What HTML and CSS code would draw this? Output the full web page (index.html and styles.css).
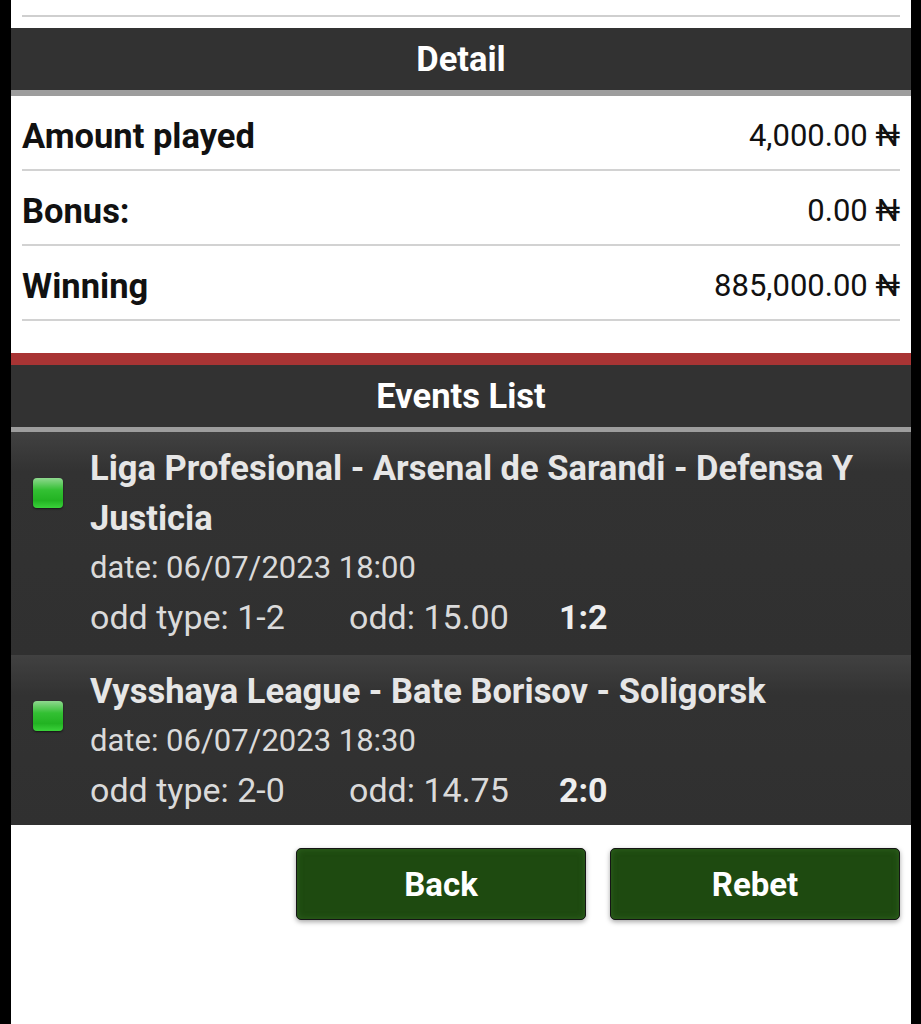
FILE: index.html
```html
<!DOCTYPE html>
<html lang="en">
<head>
<meta charset="utf-8">
<title>Bet detail</title>
<link rel="stylesheet" href="styles.css">
</head>
<body>
<div class="page">
  <div class="top-row"></div>
  <div class="section-head">Detail</div>
  <div class="detail-rows">
    <div class="drow"><span class="dlabel">Amount played</span><span class="dval">4,000.00 ₦</span></div>
    <div class="drow"><span class="dlabel">Bonus:</span><span class="dval">0.00 ₦</span></div>
    <div class="drow"><span class="dlabel">Winning</span><span class="dval">885,000.00 ₦</span></div>
  </div>
  <div class="section-head events-head">Events List</div>
  <div class="events">
    <div class="event">
      <span class="dot"></span>
      <div class="ebody">
        <div class="etitle">Liga Profesional - Arsenal de Sarandi - Defensa Y Justicia</div>
        <div class="edate">date: 06/07/2023 18:00</div>
        <div class="eodds"><span class="otype">odd type: 1-2</span><span class="odd">odd: 15.00</span><b class="score">1:2</b></div>
      </div>
    </div>
    <div class="event">
      <span class="dot"></span>
      <div class="ebody">
        <div class="etitle">Vysshaya League - Bate Borisov - Soligorsk</div>
        <div class="edate">date: 06/07/2023 18:30</div>
        <div class="eodds"><span class="otype">odd type: 2-0</span><span class="odd">odd: 14.75</span><b class="score">2:0</b></div>
      </div>
    </div>
  </div>
  <div class="actions">
    <button class="btn">Back</button>
    <button class="btn">Rebet</button>
  </div>
</div>
</body>
</html>
```

FILE: styles.css
```css
html, body {
  margin: 0;
  padding: 0;
  background: #000;
}
body {
  padding: 0 10px 0 11px;
  font-family: Roboto, "Liberation Sans", sans-serif;
}
.page {
  background: #fff;
  min-height: 1024px;
}
.top-row {
  height: 15px;
  margin: 0 11px 11px;
  border-bottom: 2px solid #cfcfcf;
}
.section-head {
  height: 62px;
  line-height: 62px;
  background: #323232;
  color: #fff;
  text-align: center;
  font-weight: 700;
  font-size: 34.5px;
  border-bottom: 6px solid #9d9d9d;
}
.detail-rows {
  margin: 0 11px;
  padding-bottom: 32px;
}
.drow {
  height: 73px;
  border-bottom: 2px solid #d2d2d2;
  display: flex;
  align-items: center;
  justify-content: space-between;
  color: #111;
}
.dlabel {
  font-weight: 700;
  font-size: 34.5px;
  padding-top: 6px;
}
.dval {
  font-weight: 400;
  font-size: 31px;
  padding-top: 6px;
}
.events-head {
  border-top: 12px solid #a83434;
  border-bottom: 5px solid #9d9d9d;
}
.event {
  display: flex;
  align-items: flex-start;
  padding: 11px 12px 11px 22px;
  background: linear-gradient(#414141, #323232 40px, #303030);
  color: #e2e2e2;
}
.event:first-child {
  padding-bottom: 14px;
}
.dot {
  flex: none;
  width: 30px;
  height: 30px;
  margin-top: 35px;
  margin-right: 27px;
  border-radius: 4px;
  background: linear-gradient(#8fd88f, #33c033 40%, #22b322 75%, #3ad23a);
  box-shadow: 0 1px 2px rgba(0,0,0,0.6);
}
.ebody {
  line-height: 50px;
}
.etitle {
  font-weight: 700;
  font-size: 34.5px;
  color: #e6e6e6;
}
.edate {
  font-size: 31px;
  color: #dadada;
}
.eodds {
  font-size: 34px;
  line-height: 48px;
  color: #dadada;
}
.otype {
  display: inline-block;
  width: 259px;
}
.odd {
  display: inline-block;
  width: 210px;
}
.score {
  font-weight: 700;
  color: #eee;
}
.actions {
  display: flex;
  justify-content: flex-end;
  gap: 24px;
  padding: 23px 11px 0;
}
.btn {
  width: 290px;
  height: 72px;
  border: 1px solid #151515;
  border-radius: 5px;
  background: #1e4a10;
  box-shadow: inset 0 0 6px #2f6320, 0 2px 5px rgba(0,0,0,0.35);
  color: #fff;
  font-family: Roboto, "Liberation Sans", sans-serif;
  font-weight: 700;
  font-size: 33px;
  padding: 0;
}
```
